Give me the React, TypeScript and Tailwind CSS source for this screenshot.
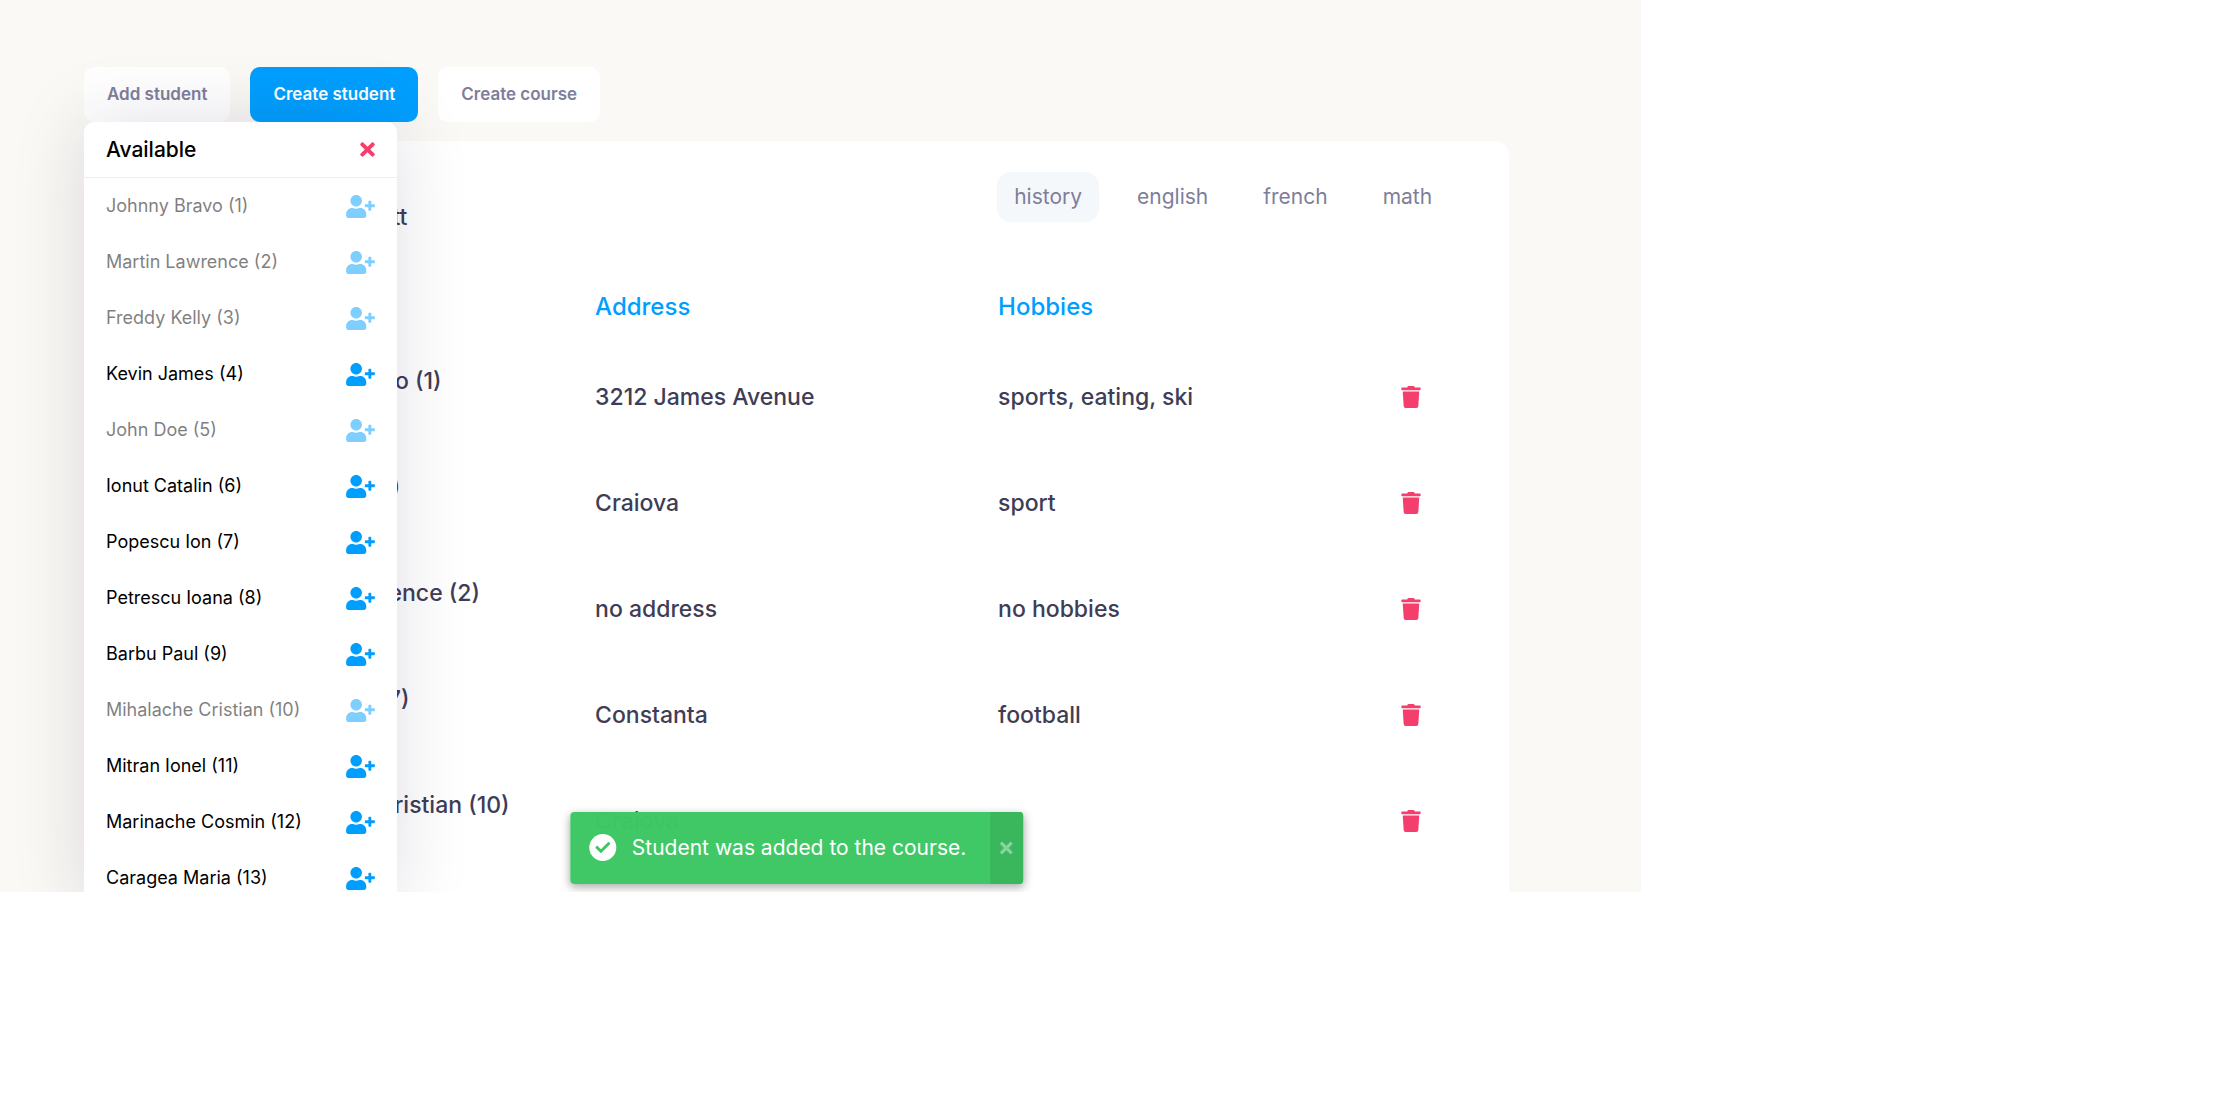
import { useState } from "react";
import { FaCheck, FaTimes, FaTrash, FaUserPlus } from "react-icons/fa";

const students = [
  { id: 1, name: "Johnny Bravo", enrolled: true },
  { id: 2, name: "Martin Lawrence", enrolled: true },
  { id: 3, name: "Freddy Kelly", enrolled: true },
  { id: 4, name: "Kevin James", enrolled: false },
  { id: 5, name: "John Doe", enrolled: true },
  { id: 6, name: "Ionut Catalin", enrolled: false },
  { id: 7, name: "Popescu Ion", enrolled: false },
  { id: 8, name: "Petrescu Ioana", enrolled: false },
  { id: 9, name: "Barbu Paul", enrolled: false },
  { id: 10, name: "Mihalache Cristian", enrolled: true },
  { id: 11, name: "Mitran Ionel", enrolled: false },
  { id: 12, name: "Marinache Cosmin", enrolled: false },
  { id: 13, name: "Caragea Maria", enrolled: false },
];

const rows = [
  { id: 1, name: "Johnny Bravo", address: "3212 James Avenue", hobbies: "sports, eating, ski" },
  { id: 5, name: "John Doe", address: "Craiova", hobbies: "sport" },
  { id: 2, name: "Martin Lawrence", address: "no address", hobbies: "no hobbies" },
  { id: 7, name: "Dan Barbu", address: "Constanta", hobbies: "football" },
  { id: 10, name: "Mihalache Cristian", address: "Craiova", hobbies: "tv" },
];

const courses = ["history", "english", "french", "math"];

function Toolbar() {
  return (
    <div className="flex gap-5 text-[17px] font-semibold text-[#7e7e9a]">
      <button className="h-[55px] rounded-[10px] bg-white px-[23px]">Add student</button>
      <button className="h-[55px] rounded-[10px] bg-[#009fff] px-[23px] text-white">Create student</button>
      <button className="h-[55px] rounded-[10px] bg-white px-[23px]">Create course</button>
    </div>
  );
}

function AvailableMenu() {
  return (
    <div className="absolute top-[55px] left-0 w-[313px] rounded-[10px] bg-white text-black shadow-[0_0_72px_rgba(50,30,70,0.15)]">
      <div className="flex h-14 items-center justify-between border-b border-[#eeeef0] px-[22px]">
        <h2 className="text-[21px] font-medium">Available</h2>
        <button aria-label="Close" className="text-[#f43f6e]">
          <FaTimes className="h-[21px] w-[15px]" />
        </button>
      </div>
      <ul>
        {students.map((s) => (
          <li
            key={s.id}
            className={"flex h-14 items-center justify-between px-[22px] " + (s.enrolled ? "opacity-50" : "")}
          >
            <span className="text-lg">
              {s.name} ({s.id})
            </span>
            <button aria-label={"Add " + s.name} disabled={s.enrolled} className="text-[#009fff]">
              <FaUserPlus className="h-[23px] w-[29px]" />
            </button>
          </li>
        ))}
      </ul>
    </div>
  );
}

function Toast() {
  return (
    <div
      role="status"
      className="absolute bottom-2 left-1/2 flex h-[72px] -translate-x-1/2 items-stretch overflow-hidden rounded-[4px] bg-[#3dc763]/98 whitespace-nowrap text-white shadow-[0_3px_10px_rgba(0,0,0,0.35)]"
    >
      <div className="flex items-center gap-4 pr-6 pl-[19px]">
        <span className="flex size-[27px] items-center justify-center rounded-full bg-white text-[#3dc763]">
          <FaCheck className="size-[15px]" />
        </span>
        <span className="text-[21px]">Student was added to the course.</span>
      </div>
      <button aria-label="Dismiss" className="flex w-[33px] items-center justify-center bg-[#3ab65c] text-lg text-[#86d69b]">
        <FaTimes />
      </button>
    </div>
  );
}

export default function App() {
  const [course, setCourse] = useState("history");
  return (
    <div className="min-h-screen bg-white font-['Inter',sans-serif]">
      <main className="h-[81vh] w-[73.33%] overflow-hidden bg-[#faf9f5] pt-[67px] pr-[132px] pl-[84px]">
        <div className="relative h-full">
          <Toolbar />
          <section className="mt-[19px] min-h-full rounded-[14px] bg-white px-[60px] pt-[31px] text-[#3f3d56]">
            <div className="flex items-start justify-between">
              <div className="pt-8 pl-[114px]">
                <h1 className="text-[23px] leading-[26px] font-medium">Michael Scott</h1>
              </div>
              <nav className="flex gap-[21px]">
                {courses.map((c) => (
                  <button
                    key={c}
                    onClick={() => setCourse(c)}
                    className={
                      "h-[50px] rounded-[14px] px-[17px] text-[21px] text-[#7e7e9a] " +
                      (course === c ? "bg-[#f4f8fb]" : "")
                    }
                  >
                    {c}
                  </button>
                ))}
              </nav>
            </div>
            <table className="mt-10 w-full table-fixed text-left text-[23px] font-medium">
              <colgroup>
                <col className="w-[34.56%]" />
                <col className="w-[30.88%]" />
                <col className="w-[30.88%]" />
                <col />
              </colgroup>
              <thead>
                <tr className="h-[74px] text-2xl text-[#009fff]">
                  <th className="pl-[114px] font-medium">Name</th>
                  <th className="font-medium">Address</th>
                  <th className="font-medium">Hobbies</th>
                  <th></th>
                </tr>
              </thead>
              <tbody>
                {rows.map((r) => (
                  <tr key={r.id} className="h-[106px]">
                    <td className="pb-8 pl-[114px] whitespace-nowrap">
                      {r.name} ({r.id})
                    </td>
                    <td>{r.address}</td>
                    <td>{r.hobbies}</td>
                    <td>
                      <button aria-label={"Remove " + r.name} className="block text-[#f43f6e]">
                        <FaTrash className="h-[22px] w-5" />
                      </button>
                    </td>
                  </tr>
                ))}
              </tbody>
            </table>
          </section>
          <AvailableMenu />
          <Toast />
        </div>
      </main>
    </div>
  );
}
